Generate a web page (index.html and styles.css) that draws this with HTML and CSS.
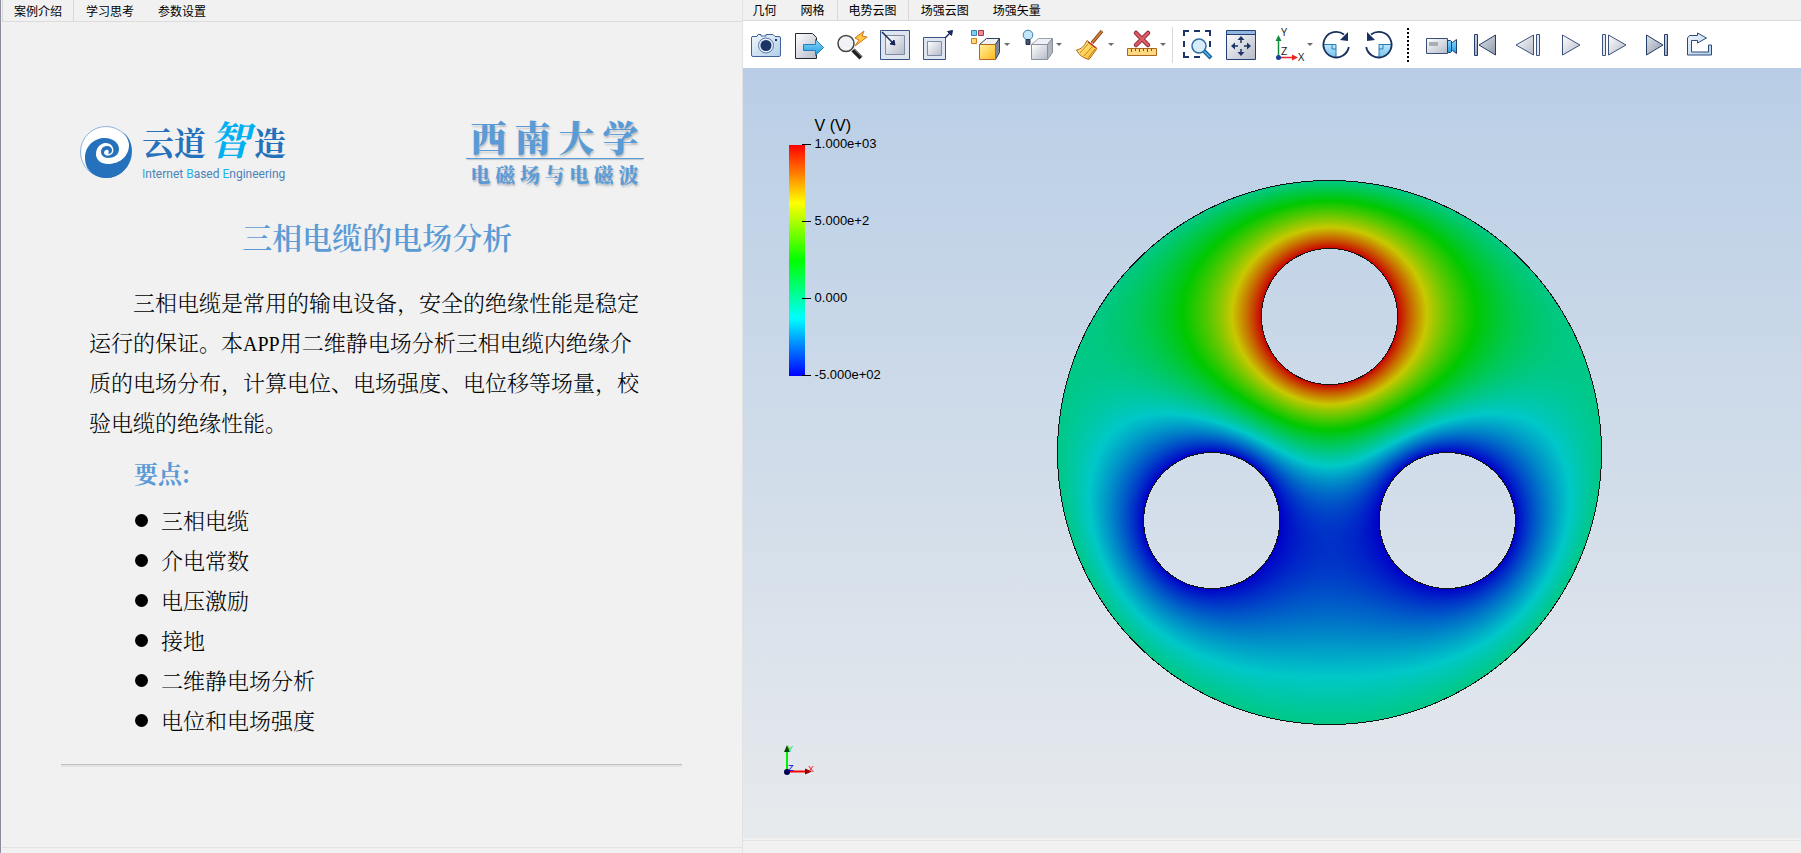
FILE: index.html
```html
<!DOCTYPE html>
<html lang="zh-CN">
<head>
<meta charset="utf-8">
<title>三相电缆的电场分析</title>
<link rel="stylesheet" href="styles.css">
</head>
<body>
<main class="app">
  <section class="pane pane-left">
    <div class="tabs" role="tablist">
      <button class="tab active" role="tab" aria-selected="true">案例介绍</button>
      <button class="tab" role="tab">学习思考</button>
      <button class="tab" role="tab">参数设置</button>
    </div>
    <article class="doc">
      <header class="brands">
        <div class="brand">
          <svg class="swirl" viewBox="0 0 54 54" aria-hidden="true">
            <circle cx="27" cy="27" r="25.500" fill="#fff" stroke="#8db4dc"/>
            <path d="M44 7C53 14 54 25 52 33C49 45 39 53 28 53C15 53 6 45 6 33C6 21 15 13 26 13C34 13 40 18 40 24C40 30 35 33 29 33C25 33 22 30 22 27C22 23 25 21 28 21C31 21 33 23 33 25C33 28 31 29 29 29C30 28 30 26 29 25C27 24 25 26 25 28C26 31 29 31 31 30C34 29 35 26 34 23C33 19 29 18 26 18C20 19 17 24 17 29C17 35 22 39 29 39C42 39 50 30 50 20C50 15 47 10 44 7Z" fill="#2571bb"/>
          </svg>
          <div class="brand-text">
            <div class="brand-name"><span>云</span><span>道</span><span class="zhi">智</span><span>造</span></div>
            <div class="brand-sub"><i>I</i>nternet <i>B</i>ased <i>E</i>ngineering</div>
          </div>
        </div>
        <div class="univ">
          <div class="univ-name"><span>西</span><span>南</span><span>大</span><span>学</span></div>
          <div class="univ-sub"><span>电</span><span>磁</span><span>场</span><span>与</span><span>电</span><span>磁</span><span>波</span></div>
        </div>
      </header>
      <h1 class="title">三相电缆的电场分析</h1>
      <p class="intro">三相电缆是常用的输电设备，安全的绝缘性能是稳定<br>运行的保证。本<span class="latin">APP</span>用二维静电场分析三相电缆内绝缘介<br>质的电场分布，计算电位、电场强度、电位移等场量，校<br>验电缆的绝缘性能。</p>
      <h2 class="points-title">要点:</h2>
      <ul class="points">
        <li>三相电缆</li>
        <li>介电常数</li>
        <li>电压激励</li>
        <li>接地</li>
        <li>二维静电场分析</li>
        <li>电位和电场强度</li>
      </ul>
      <hr class="rule">
    </article>
  </section>

  <section class="pane pane-right">
    <div class="tabs" role="tablist">
      <button class="tab" role="tab">几何</button>
      <button class="tab" role="tab">网格</button>
      <button class="tab active" role="tab" aria-selected="true">电势云图</button>
      <button class="tab" role="tab">场强云图</button>
      <button class="tab" role="tab">场强矢量</button>
    </div>
    <div class="toolbar" role="toolbar" aria-label="视图工具">
      <svg class="defs" aria-hidden="true"><defs>
        <linearGradient id="steel" x1="0" y1="0" x2="1" y2="1"><stop offset="0" stop-color="#fff"/><stop offset="1" stop-color="#b4bac8"/></linearGradient>
        <linearGradient id="steelDark" x1="0" y1="0" x2="1" y2="1"><stop offset="0" stop-color="#e0e4ea"/><stop offset="1" stop-color="#8e98a8"/></linearGradient>
        <linearGradient id="sky" x1="0" y1="0" x2="0" y2="1"><stop offset="0" stop-color="#8fd8fa"/><stop offset="1" stop-color="#1c9be0"/></linearGradient>
        <linearGradient id="ice" x1="0" y1="0" x2="1" y2="1"><stop offset="0" stop-color="#eef6fc"/><stop offset="1" stop-color="#b3cfe9"/></linearGradient>
        <linearGradient id="gold" x1="0" y1="0" x2="1" y2="1"><stop offset="0" stop-color="#fff0a0"/><stop offset="1" stop-color="#ffb91a"/></linearGradient>
      </defs></svg>
      <button class="tool" aria-label="截图"><svg viewBox="0 0 32 32"><path d="M2 7.500h5l1-2h3V7h5V5.500h7l2 2h4q1.500 0 1.500 1.500v17q0 1.500-1.500 1.500H3q-1.500 0-1.500-1.500V9q0-1.500 1-1.500z" fill="url(#ice)" stroke="#3f6499"/><circle cx="16" cy="16.500" r="7.500" fill="#e8eff8" stroke="#5577a8"/><circle cx="16" cy="16.500" r="5.500" fill="#1d3466"/><path d="M25 11h2" stroke="#1d3466" stroke-width="2"/></svg></button>
      <button class="tool" aria-label="导出"><svg viewBox="0 0 32 32"><path d="M2.500 4.500h17l4 4v21h-21z" fill="url(#steel)" stroke="#222a3a"/><path d="M10.500 15.500h12v-5l8 8-8 8v-5h-12z" fill="url(#sky)" stroke="#2a7cb8"/></svg></button>
      <button class="tool" aria-label="快速缩放"><svg viewBox="0 0 32 32"><path d="M17 21l8 8" stroke="#222" stroke-width="4.500"/><path d="M18 20l8 8" stroke="#777" stroke-width="1"/><circle cx="10" cy="14.500" r="8" fill="#f0f2f5" stroke="#444" stroke-width="1.500"/><path d="M28 2l-9 7 4 2-4 6 12-9-5-1z" fill="#ffc83a" stroke="#cf7420"/></svg></button>
      <button class="tool" aria-label="缩小视图"><svg viewBox="0 0 32 32"><path d="M1.500 1.500h29v29h-29z" fill="#dfe5ee" stroke="#3a5484"/><path d="M6.500 6.500h19v19h-19z" fill="url(#steel)" stroke="#7d8ba4"/><path d="M3 3l12 12" stroke="#18285c" stroke-width="1.500"/><path d="M16 16l-5-1 4-4z" fill="#18285c" stroke="#18285c"/></svg></button>
      <button class="tool" aria-label="放大视图"><svg viewBox="0 0 32 32"><path d="M1.500 8.500h22v22h-22z" fill="#dfe5ee" stroke="#3a5484"/><path d="M5.500 12.500h14v14h-14z" fill="url(#steel)" stroke="#7d8ba4"/><path d="M23 9l6-6" stroke="#18285c" stroke-width="1.500"/><path d="M30.500 1.500l-1 5-4-4z" fill="#18285c" stroke="#18285c"/></svg></button>
      <button class="tool drop" aria-label="着色"><svg viewBox="0 0 32 32"><path d="M1.500 1.500h5v5h-5z" fill="#7fcdf2" stroke="#3382b4"/><path d="M8.500 1.500h5v5h-5z" fill="#eb8c96" stroke="#a33a48"/><path d="M1.500 9.500h5v5h-5z" fill="#ffd878" stroke="#d07c24"/><path d="M9.500 15.500l7-6h13l-4 6z" fill="#eef0f4" stroke="#33415f"/><path d="M25.500 15.500l4-6v14l-4 7z" fill="#7d8798" stroke="#33415f"/><path d="M9.500 15.500h16v15h-16z" fill="url(#gold)" stroke="#b5671d"/></svg></button>
      <button class="tool drop" aria-label="光照"><svg viewBox="0 0 32 32"><path d="M9.500 15.500l7-6h14l-5 6z" fill="#eef0f4" stroke="#9aa1ad"/><path d="M25.500 15.500l5-6v14l-5 7z" fill="#b0b6c0" stroke="#868e9b"/><path d="M9.500 15.500h16v15h-16z" fill="url(#steel)" stroke="#8a919e"/><circle cx="6" cy="6" r="4.800" fill="#c3e6fb" stroke="#3e7fae"/><path d="M4 10.500h4v5H4z" fill="#42536f" stroke="#25334d"/></svg></button>
      <button class="tool drop" aria-label="清除"><svg viewBox="0 0 32 32"><path d="M28 2L18 14" stroke="#7e4213" stroke-width="3.500"/><path d="M28 2L18 14" stroke="#d88438" stroke-width="1.500"/><path d="M13 11.500l10 8-8 11C9 29 5 26 2.500 21c5-1 8-4 10.500-9.500z" fill="url(#gold)" stroke="#ad661c"/><path d="M14 15L6 24m12-6l-8 9m11-7l-7 9" stroke="#c0832a" fill="none"/><path d="M14 13l8 6" stroke="#b53c2d" stroke-width="1.500"/></svg></button>
      <button class="tool drop" aria-label="删除测量"><svg viewBox="0 0 32 32"><path d="M10 4l12 12M22 4L10 16" stroke="#8d2732" stroke-width="4.500" stroke-linecap="round"/><path d="M10 4l12 12M22 4L10 16" stroke="#dc5b66" stroke-width="2.500" stroke-linecap="round"/><path d="M1.500 19.500h29v7h-29z" fill="#ffd980" stroke="#a9661e"/><path d="M5.500 20v3m4-3v2m4-2v3m4-3v2m4-2v3m4-3v2" stroke="#80501b"/></svg></button>
      <span class="sep"></span>
      <button class="tool" aria-label="框选缩放"><svg viewBox="0 0 32 32"><path d="M2 7V2H7M12 2h6M23 2h5v5M28 12v6M2 12v6M2 23v5h5M12 28h6" fill="none" stroke="#1d3466" stroke-width="2"/><path d="M22 22l7 7" stroke="#17629c" stroke-width="4"/><path d="M22 22l6 6" stroke="#55b3ea" stroke-width="1.500"/><circle cx="17" cy="17" r="7" fill="#d7ecf9" stroke="#2d6da6" stroke-width="1.500"/></svg></button>
      <button class="tool" aria-label="适应窗口"><svg viewBox="0 0 32 32"><path d="M1.500 1.500h29v29h-29z" fill="url(#steel)" stroke="#233f74"/><path d="M2 2h28v3H2z" fill="#93b5de"/><path d="M2 5.500h28" stroke="#233f74"/><path d="M16 9v5m0 6v5M8 17h5m6 0h5" stroke="#1d3466" stroke-width="1.500"/><path d="M16 7l-3.500 4h7zM16 27l-3.500-4h7zM6 17l4-3.500v7zM26 17l-4-3.500v7z" fill="#1d3466"/></svg></button>
      <button class="tool drop" aria-label="视角"><svg class="axes" viewBox="0 0 32 32"><path d="M5.500 28V10" stroke="#0f8f3c" stroke-width="1.500"/><path d="M5.500 6L2.500 12h6z" fill="#0f8f3c"/><path d="M6 28.500h15" stroke="#e8251f" stroke-width="1.500"/><path d="M25 28.500l-6-3v6z" fill="#e8251f"/><circle cx="5.500" cy="28.500" r="2.500" fill="#1d3d9c"/><text x="8" y="7">Y</text><text x="8" y="26">Z</text><text x="25" y="32">X</text></svg></button>
      <button class="tool" aria-label="顺时针旋转"><svg viewBox="0 0 32 32"><path d="M3.500 15.500H16V28C9 28 4 23 3.500 15.500z" fill="url(#sky)" opacity=".6"/><path d="M3.500 15.500H16V28M12 16v4h4" fill="none" stroke="#2a7cb8"/><path d="M24 5.500A12.800 12.800 0 1 0 28.800 18" fill="none" stroke="#18305e" stroke-width="1.800"/><path d="M28 3v9l-8-1z" fill="#18305e"/></svg></button>
      <button class="tool" aria-label="逆时针旋转"><svg viewBox="0 0 32 32"><path d="M28.500 15.500H16V28C23 28 28 23 28.500 15.500z" fill="url(#sky)" opacity=".6"/><path d="M28.500 15.500H16V28M20 16v4h-4" fill="none" stroke="#2a7cb8"/><path d="M8 5.500A12.800 12.800 0 1 1 3.200 18" fill="none" stroke="#18305e" stroke-width="1.800"/><path d="M4 3v9l8-1z" fill="#18305e"/></svg></button>
      <span class="dots"></span>
      <button class="tool" aria-label="录制"><svg viewBox="0 0 32 32"><path d="M.500 9.500h21v15H.500z" fill="url(#steel)" stroke="#3c4f7a"/><path d="M3 13h9v4H3z" fill="#a9adb4"/><path d="M21.500 11.500h3l2 2 4-3v14l-4-3-2 2h-3z" fill="url(#sky)" stroke="#24406e"/><path d="M25.500 12v10" stroke="#24406e"/></svg></button>
      <button class="tool" aria-label="第一帧"><svg viewBox="0 0 32 32"><path d="M5.500 5.500h3v21h-3z" fill="url(#steelDark)" stroke="#253d6a"/><path d="M26.500 6v20L10 16z" fill="url(#steelDark)" stroke="#253d6a"/></svg></button>
      <button class="tool" aria-label="上一帧"><svg viewBox="0 0 32 32"><path d="M21.500 6v20L4 16z" fill="url(#steel)" stroke="#3c527c"/><path d="M24.500 5.500h3v21h-3z" fill="#e4e8f0" stroke="#3c527c"/></svg></button>
      <button class="tool" aria-label="播放"><svg viewBox="0 0 32 32"><path d="M7.500 6v20L25 16z" fill="url(#steel)" stroke="#3c527c"/></svg></button>
      <button class="tool" aria-label="下一帧"><svg viewBox="0 0 32 32"><path d="M10.500 6v20L28 16z" fill="url(#steel)" stroke="#3c527c"/><path d="M4.500 5.500h3v21h-3z" fill="#e4e8f0" stroke="#3c527c"/></svg></button>
      <button class="tool" aria-label="最后一帧"><svg viewBox="0 0 32 32"><path d="M5.500 6v20L22 16z" fill="url(#steelDark)" stroke="#253d6a"/><path d="M23.500 5.500h3v21h-3z" fill="url(#steelDark)" stroke="#253d6a"/></svg></button>
      <button class="tool" aria-label="循环"><svg viewBox="0 0 32 32"><path d="M13.500 6.500v-2.500l9 5-9 5v-2.500H7.500v11.500h17v-7h3v10h-24v-17l2-2.500z" fill="url(#ice)" stroke="#2d4a7a"/></svg></button>
    </div>
    <div class="scene">
      <div class="legend">
        <div class="legend-title">V (V)</div>
        <div class="legend-body">
          <div class="legend-bar"></div>
          <ol class="legend-labels"><li>1.000e+03</li><li>5.000e+2</li><li>0.000</li><li>-5.000e+02</li></ol>
        </div>
      </div>
      <canvas class="field" id="field" width="547" height="547"></canvas>
      <svg class="triad" viewBox="0 0 36 36" aria-hidden="true"><path d="M7 28V8" stroke="#00f000" stroke-width="2"/><path d="M7 2L4 9h6z" fill="#054d05"/><path d="M7 28.500h18" stroke="#f00" stroke-width="2"/><path d="M32 28.500l-7-3v6z" fill="#8d0000"/><circle cx="7" cy="29" r="3" fill="#000050"/><text x="7" y="9" fill="#1ee01e">Y</text><text x="8" y="28" fill="#0000d8">Z</text><text x="28" y="29" fill="#f01010">X</text></svg>
    </div>
  </section>
</main>
<script src="field.js"></script>
</body>
</html>
```
FILE: styles.css
```css
* { box-sizing: border-box; }
body {
  margin: 0;
  background: #f1f1f1;
  color: #000;
  font-family: "Liberation Sans", "Noto Sans CJK SC", sans-serif;
}
.app {
  display: grid;
  grid-template-columns: 7fr 10fr;
  min-height: 100vh;
}
.pane { display: flex; flex-direction: column; min-width: 0; }
.pane-left { border-left: 1px solid #8c8c9c; padding: 0 0 5px 1px; }
.pane-right {
  border-left: 1px solid #e2e2e2;
  padding-bottom: 15px;
  box-shadow: inset 0 -12px #f1f1f1, inset 0 -13px #e2e2e2;
}

.tabs { display: flex; height: 21px; border-bottom: 1px solid #dcdcdc; flex: none; }
.pane-left .tabs { height: 22px; }
.tab {
  border: 0;
  background: none;
  color: #000;
  padding: 0 12px;
  font: 12px/18px "Noto Sans CJK SC", sans-serif;
}
.tab.active { border: solid #d8d8d8; border-width: 0 1px; padding: 0 11px; }
.pane-right .tab:first-child { padding-left: 10px; }

.doc {
  flex: 1;
  padding: 93px 60px 0 59px;
  border-bottom: 1px solid #e2e2e2;
}
.brands { display: flex; justify-content: space-between; padding: 0 38px 0 18px; }
.brand { display: flex; gap: 9px; height: 70px; }
.swirl { width: 54px; height: 54px; margin-top: 10px; }
.brand-text { display: flex; flex-direction: column; }
.brand-name {
  display: flex;
  align-items: center;
  height: 52px;
  color: #2571bb;
  font: 700 32px/48px "Noto Serif CJK SC", "Noto Sans CJK SC", serif;
}
.brand-name .zhi { margin: 0 4px 6px; font-size: 40px; font-style: italic; color: #00b0f0; }
.brand-sub { font: 12px/14px Roboto, sans-serif; color: #4b82b8; white-space: nowrap; }
.brand-sub i { font-style: normal; color: #1fb4ee; }
.univ { width: 178px; color: #5b9bd5; text-shadow: 1px 2px 2px #b8bcc2; font-family: "Noto Serif CJK SC", "Noto Sans CJK SC", serif; font-weight: 900; }
.univ-name, .univ-sub { display: flex; justify-content: space-between; padding: 0 5px; }
.univ-name { height: 44px; font-size: 36px; line-height: 44px; border-bottom: 1px solid #5b9bd5; box-shadow: 0 2px 1px -1px #c3c9ce; }
.univ-sub { font-size: 20px; line-height: 32px; }

.title {
  margin: 25px 0 0;
  padding-left: 12px;
  text-align: center;
  color: #5b9bd5;
  font: 600 30px/40px "Noto Serif CJK SC", "Noto Sans CJK SC", serif;
}
.intro {
  margin: 26px 0 0;
  padding-left: 28px;
  text-indent: 44px;
  white-space: nowrap;
  font: 300 22px/40px "Noto Serif CJK SC", "Noto Sans CJK SC", serif;
}
.latin { font: 20px/20px "Liberation Serif", serif; }
.points-title {
  margin: 12px 0 8px;
  padding-left: 73px;
  color: #5b9bd5;
  font: 700 24px/38px "Noto Serif CJK SC", "Noto Sans CJK SC", serif;
}
.points { list-style: none; margin: 0; padding: 0 0 0 74px; font: 300 22px/40px "Noto Serif CJK SC", "Noto Sans CJK SC", serif; }
.points li { display: flex; align-items: center; gap: 13px; }
.points li::before { content: ""; width: 13px; height: 13px; border-radius: 50%; background: #000; }
.rule { margin: 24px 0 0; height: 3px; border: 0; border-top: 1px solid #bfbfbf; background: #e3e3e3; }

.toolbar { display: flex; align-items: center; height: 47px; padding-left: 2px; background: #fff; flex: none; }
.defs { position: absolute; width: 0; height: 0; }
.tool {
  display: flex;
  align-items: center;
  justify-content: center;
  flex: none;
  width: 43px;
  height: 42px;
  padding: 0;
  border: 0;
  background: none;
}
.tool svg { width: 32px; height: 32px; overflow: visible; fill: none; }
.tool.drop { width: 52px; gap: 2px; padding-left: 8px; }
.tool.drop::after { content: ""; border: solid transparent; border-top-color: #6d6d6d; border-width: 3px 3px 0; }
.tool .axes text { font: 11px "Open Sans", sans-serif; fill: #222; }
.sep { width: 1px; height: 36px; margin: 0 4px; background: #d8d8d8; }
.dots { width: 2px; height: 34px; margin: 0 12px 0 6px; background: repeating-linear-gradient(#000 0 2px, transparent 2px 4px); }

.scene {
  position: relative;
  flex: 1;
  min-height: 600px;
  overflow: hidden;
  background: linear-gradient(#b9cee6, #e7eaed);
}
.field { position: absolute; left: calc(50% + 57px); top: 50%; margin: -274px 0 0 -273px; }
.legend { position: absolute; left: 46px; top: 48px; }
.legend-title { padding-left: 26px; font: 16px/20px "Liberation Sans", sans-serif; }
.legend-body { display: flex; }
.legend-bar {
  width: 16px;
  height: 231px;
  margin-top: 9px;
  background: linear-gradient(#f00, #ff0 25%, #0f0 50%, #0ff 75%, #00f);
}
.legend-labels {
  display: flex;
  flex-direction: column;
  justify-content: space-between;
  height: 245px;
  margin: 1px 0 0 -3px;
  padding: 0;
  list-style: none;
  font: 13px/14px "Liberation Sans", sans-serif;
}
.legend-labels li { display: flex; align-items: center; gap: 4px; }
.legend-labels li::before { content: ""; width: 9px; height: 1px; background: #000; }
.triad { position: absolute; left: 37px; bottom: 59px; width: 36px; height: 36px; font: 9px "Liberation Sans", sans-serif; }
```
FILE: field.js
```js
// Potential in a grounded round sheath (radius 4) with three round conductors
// (radius 1) at 1000 V, -500 V and -500 V. Charges are placed inside each
// conductor, with their mirror charges outside the sheath.
(function () {
  var R = 4, N = 20, INNER = 0.6;
  var c30 = Math.cos(Math.PI / 6);
  var cores = [
    { x: 0, y: -2, v: 1000 },
    { x: -2 * c30, y: 1, v: -500 },
    { x: 2 * c30, y: 1, v: -500 }
  ];
  var sources = [], points = [];
  cores.forEach(function (c) {
    for (var i = 0; i < N; i++) {
      var a = 2 * Math.PI * (i + 0.5) / N;
      var sx = c.x + INNER * Math.cos(a), sy = c.y + INNER * Math.sin(a);
      var d2 = sx * sx + sy * sy;
      sources.push({ x: sx, y: sy, mx: sx * R * R / d2, my: sy * R * R / d2, k: R * R / d2 });
      points.push({ x: c.x + Math.cos(a), y: c.y + Math.sin(a), v: c.v });
    }
  });
  function green(s, x, y) {
    var a = (x - s.x) * (x - s.x) + (y - s.y) * (y - s.y);
    var b = (x - s.mx) * (x - s.mx) + (y - s.my) * (y - s.my);
    return Math.log(a * s.k / b);
  }
  var n = sources.length;
  var m = points.map(function (p) {
    var row = sources.map(function (s) { return green(s, p.x, p.y); });
    row.push(p.v);
    return row;
  });
  for (var i = 0; i < n; i++) {
    var best = i;
    for (var r = i + 1; r < n; r++) if (Math.abs(m[r][i]) > Math.abs(m[best][i])) best = r;
    var t = m[i]; m[i] = m[best]; m[best] = t;
    for (r = i + 1; r < n; r++) {
      var f = m[r][i] / m[i][i];
      for (var k = i; k <= n; k++) m[r][k] -= f * m[i][k];
    }
  }
  var q = [];
  for (i = n - 1; i >= 0; i--) {
    var sum = m[i][n];
    for (k = i + 1; k < n; k++) sum -= m[i][k] * q[k];
    q[i] = sum / m[i][i];
  }

  var stops = [[0, 0, 200], [0, 200, 200], [0, 200, 0], [200, 200, 0], [200, 0, 0]];
  var canvas = document.getElementById('field');
  var ctx = canvas.getContext('2d');
  var size = canvas.width, mid = (size - 1) / 2, unit = 68;
  var img = ctx.createImageData(size, size);
  for (var py = 0; py < size; py++) {
    for (var px = 0; px < size; px++) {
      var x = (px - mid) / unit, y = (py - mid) / unit;
      var edge = (R - Math.sqrt(x * x + y * y)) * unit;
      for (i = 0; i < 3; i++) {
        edge = Math.min(edge, (Math.sqrt(Math.pow(x - cores[i].x, 2) + Math.pow(y - cores[i].y, 2)) - 1) * unit);
      }
      if (edge < -0.5) continue;
      var o = (py * size + px) * 4;
      img.data[o + 3] = 255;
      if (edge < 0.5) {
        img.data[o] = img.data[o + 1] = img.data[o + 2] = 20;
        continue;
      }
      var v = 0;
      for (k = 0; k < n; k++) v += q[k] * green(sources[k], x, y);
      var u = Math.max(0, Math.min(3.9999, (v + 500) / 375));
      var lo = Math.floor(u), w = u - lo;
      for (i = 0; i < 3; i++) img.data[o + i] = stops[lo][i] * (1 - w) + stops[lo + 1][i] * w;
    }
  }
  ctx.putImageData(img, 0, 0);
})();
```
